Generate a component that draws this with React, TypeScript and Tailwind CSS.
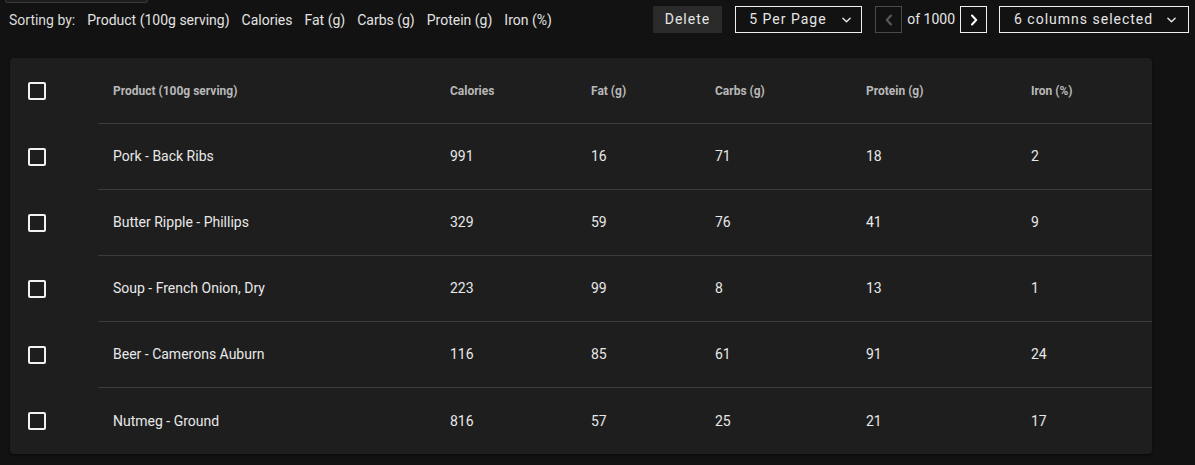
import React from "react";

interface Food {
  name: string;
  calories: number;
  fat: number;
  carbs: number;
  protein: number;
  iron: number;
}

const rows: Food[] = [
  { name: "Pork - Back Ribs", calories: 991, fat: 16, carbs: 71, protein: 18, iron: 2 },
  { name: "Butter Ripple - Phillips", calories: 329, fat: 59, carbs: 76, protein: 41, iron: 9 },
  { name: "Soup - French Onion, Dry", calories: 223, fat: 99, carbs: 8, protein: 13, iron: 1 },
  { name: "Beer - Camerons Auburn", calories: 116, fat: 85, carbs: 61, protein: 91, iron: 24 },
  { name: "Nutmeg - Ground", calories: 816, fat: 57, carbs: 25, protein: 21, iron: 17 },
];

const columns = ["Product (100g serving)", "Calories", "Fat (g)", "Carbs (g)", "Protein (g)", "Iron (%)"];

const gridCols = "grid grid-cols-[337px_141px_124px_151px_165px_136px]";

const ChevronDown = () => (
  <svg viewBox="0 0 10 6" className="w-[9px] h-[6px]" fill="none" stroke="currentColor" strokeWidth={1.6}>
    <path d="M1 1l4 4 4-4" strokeLinecap="round" strokeLinejoin="round" />
  </svg>
);

const Chevron = ({ left }: { left?: boolean }) => (
  <svg viewBox="0 0 8 12" className="w-[8px] h-[12px]" fill="none" stroke="currentColor" strokeWidth={2}>
    <path d={left ? "M6 1.5L1.8 6 6 10.5" : "M2 1.5L6.2 6 2 10.5"} strokeLinecap="round" strokeLinejoin="round" />
  </svg>
);

const Checkbox = () => (
  <div className="w-[18px] h-[18px] rounded-[2px] border-2 border-[#f2f2f2]" />
);

export default function App() {
  return (
    <div
      className="min-h-screen bg-[#121212] text-[#e6e6e6]"
      style={{ fontFamily: "Roboto, 'Liberation Sans', sans-serif" }}
    >
      {/* bottom edge of a control scrolled above */}
      <div className="ml-[5px] w-[143px] h-[3px] rounded-b-[4px] border-x border-b border-[#3a3a3a] bg-[#1c1c1c]" />

      {/* TOOLBAR */}
      <div className="mt-[3px] h-[27px] flex items-center pl-[9px] pr-[6px] text-[14px]">
        <div className="flex items-center pt-[1px]">
          <span className="mr-[12px] text-[#dcdcdc]">Sorting by:</span>
          <div className="flex items-center gap-[12px] text-[#e2e2e2]">
            {columns.map((c) => (
              <span key={c}>{c}</span>
            ))}
          </div>
        </div>

        <div className="ml-auto flex items-center h-full text-[14px]">
          <button className="h-full px-[12px] bg-[#2a2a2a] tracking-[1px] text-[#e6e6e6]">Delete</button>
          <div className="ml-[13px] h-full w-[127px] border border-[#f0f0f0] flex items-center justify-between pl-[13px] pr-[10px] tracking-[1px]">
            <span>5 Per Page</span>
            <ChevronDown />
          </div>
          <button className="ml-[13px] h-full w-[27px] border border-[#4a4a4a] flex items-center justify-center text-[#5a5a5a]">
            <Chevron left />
          </button>
          <span className="mx-[5px]">of 1000</span>
          <button className="h-full w-[27px] border border-[#f0f0f0] flex items-center justify-center text-white">
            <Chevron />
          </button>
          <div className="ml-[12px] h-full w-[190px] border border-[#f0f0f0] flex items-center justify-between pl-[14px] pr-[12px] tracking-[1px]">
            <span>6 columns selected</span>
            <ChevronDown />
          </div>
        </div>
      </div>

      {/* TABLE CARD */}
      <div className="ml-[10px] mt-[25px] w-[1142px] rounded-[4px] bg-[#1e1e1e] shadow-[0_1px_3px_rgba(0,0,0,0.6)]">
        {/* header */}
        <div className="flex h-[66px]">
          <div className="w-[88px] flex items-center pl-[18px]">
            <Checkbox />
          </div>
          <div className={`flex-1 border-b border-[#3c3c3c] items-center pt-[1px] ${gridCols}`}>
            {columns.map((c) => (
              <div key={c} className="pl-[15px] text-[12px] font-bold text-[#b8b8b8]">
                {c}
              </div>
            ))}
          </div>
        </div>

        {rows.map((r, i) => (
          <div key={r.name} className="flex h-[66px]">
            <div className="w-[88px] flex items-center pl-[18px]">
              <Checkbox />
            </div>
            <div
              className={`flex-1 items-center text-[14px] text-[#e8e8e8] ${gridCols} ${
                i < rows.length - 1 ? "border-b border-[#3c3c3c]" : ""
              }`}
            >
              <div className="pl-[15px]">{r.name}</div>
              <div className="pl-[15px]">{r.calories}</div>
              <div className="pl-[15px]">{r.fat}</div>
              <div className="pl-[15px]">{r.carbs}</div>
              <div className="pl-[15px]">{r.protein}</div>
              <div className="pl-[15px]">{r.iron}</div>
            </div>
          </div>
        ))}
      </div>
    </div>
  );
}
